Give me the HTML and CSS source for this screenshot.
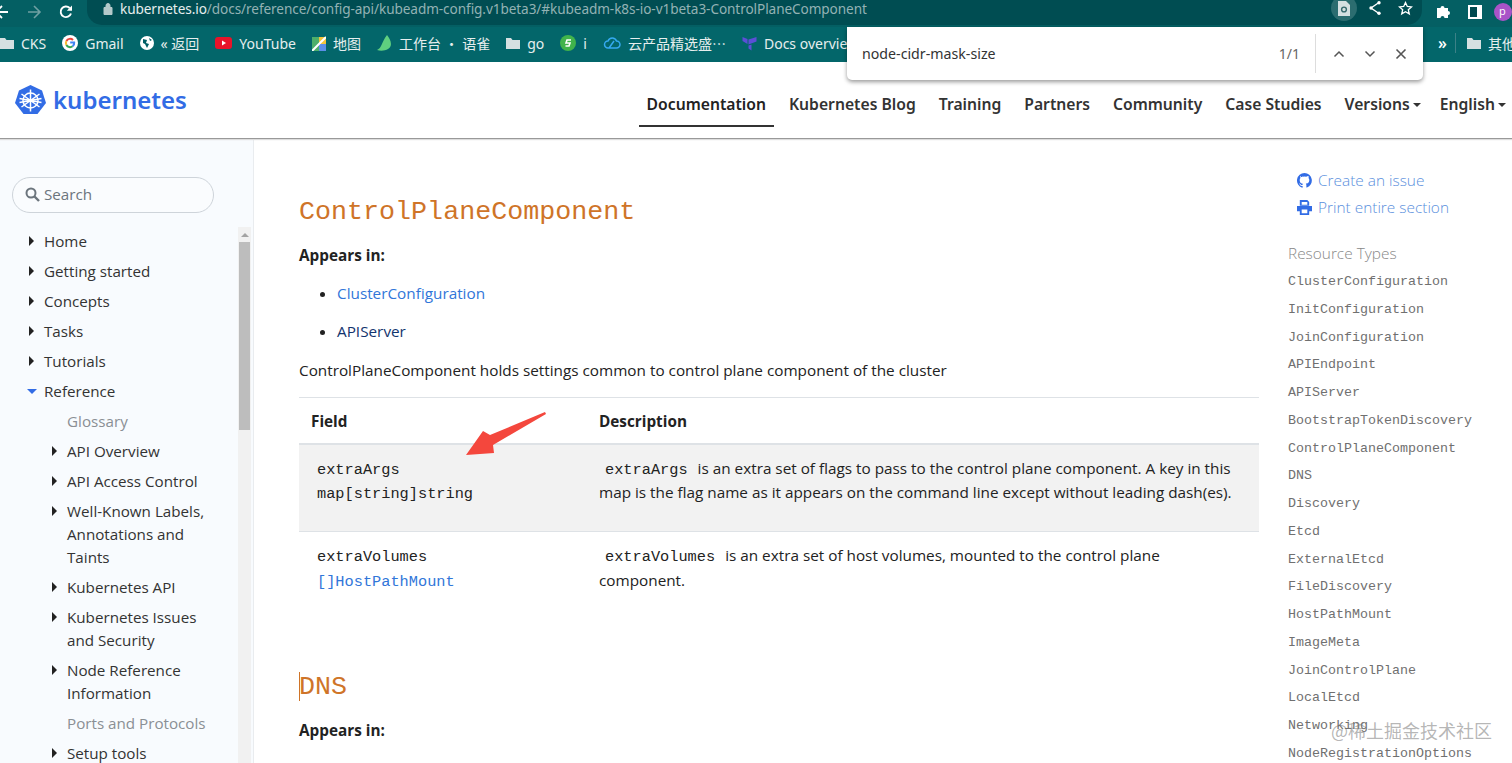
FILE: index.html
```html
<!DOCTYPE html>
<html lang="en">

<head>
    <meta charset="UTF-8">
    <meta name="viewport" content="width=device-width, initial-scale=1.0">
    <title>kubeadm Configuration (v1beta3)</title>
    <link rel="stylesheet" href="styles.css">
</head>

<body>

    <!-- Browser chrome -->
    <div class="toolbar">
        <svg class="nav-icon" width="16" height="16" viewBox="0 0 16 16"><path d="M14 8H2M8 2L2 8l6 6" fill="none" stroke="#fff" stroke-width="1.8"/></svg>
        <svg class="nav-icon" width="16" height="16" viewBox="0 0 16 16"><path d="M2 8h12M8 2l6 6-6 6" fill="none" stroke="#6fa0a3" stroke-width="1.6"/></svg>
        <svg class="nav-icon" width="16" height="16" viewBox="0 0 16 16"><path d="M13 9.500A5.300 5.300 0 1 1 11.700 4" fill="none" stroke="#fff" stroke-width="1.900"/><path d="M14 1.500v5.200H8.800z" fill="#fff"/></svg>
        <div class="omnibox">
            <svg width="10" height="13" viewBox="0 0 10 13"><path d="M1 5.500h8v7H1zM3 5.500V3.500a2 2 0 0 1 4 0v2" fill="#b4c9ca" stroke="#b4c9ca"/></svg>
            <span class="url"><b>kubernetes.io</b>/docs/reference/config-api/kubeadm-config.v1beta3/#kubeadm-k8s-io-v1beta3-ControlPlaneComponent</span>
            <span class="lens">
                <svg width="12" height="15" viewBox="0 0 12 15"><path d="M0 0h8l4 4v11H0z" fill="#d5e0e1"/><circle cx="6" cy="8.500" r="2.400" fill="none" stroke="#35686c" stroke-width="1.400"/></svg>
            </span>
            <svg class="omni-icon share" width="14" height="16" viewBox="0 0 14 16"><path d="M11 2.500L3 8l8 5.500" fill="none" stroke="#fff" stroke-width="1.400"/><circle cx="11" cy="2.800" r="1.700" fill="#fff"/><circle cx="3" cy="8" r="1.700" fill="#fff"/><circle cx="11" cy="13.200" r="1.700" fill="#fff"/></svg>
            <svg class="omni-icon" width="15" height="15" viewBox="0 0 15 15"><path d="M7.500 1.500l1.800 4 4.200.4-3.200 2.800 1 4.200-3.800-2.200-3.800 2.200 1-4.200L1.500 5.900l4.200-.4z" fill="none" stroke="#fff" stroke-width="1.300"/></svg>
        </div>
        <svg class="puzzle" width="15" height="15" viewBox="0 0 15 15"><path d="M1 4h3.500a2 2 0 0 1 4 0H12v3a2 2 0 0 1 0 4v3H8.500a2 2 0 0 0-4 0H1z" fill="#fff"/></svg>
        <svg class="panel" width="14" height="14" viewBox="0 0 14 14"><path d="M0 0h14v14H0z" fill="#fff"/><path d="M2 2h7v10H2z" fill="#00494f"/></svg>
        <span class="avatar">p</span>
    </div>

    <div class="bookmarks">
        <span class="bookmark cut"><svg width="14" height="12" viewBox="0 0 14 12"><path d="M0 1h5l1.500 2H14v9H0z" fill="#d5e0e1"/></svg>CKS</span>
        <span class="bookmark">
            <svg width="16" height="16" viewBox="0 0 16 16">
                <circle cx="8" cy="8" r="8" fill="#fff"/>
                <path d="M11 5a4.200 4.200 0 0 0-6.600 1" fill="none" stroke="#e8453c" stroke-width="2"/>
                <path d="M4.400 6a4.200 4.200 0 0 0 0 4" fill="none" stroke="#f9bb2d" stroke-width="2"/>
                <path d="M4.400 10a4.200 4.200 0 0 0 6.200 1.300" fill="none" stroke="#34a853" stroke-width="2"/>
                <path d="M10.600 11.300A4.200 4.200 0 0 0 12.200 7.500H8.200" fill="none" stroke="#4285f4" stroke-width="2"/>
            </svg>Gmail
        </span>
        <span class="bookmark"><svg width="14" height="14" viewBox="0 0 14 14"><circle cx="7" cy="7" r="7" fill="#fff"/><path d="M3 3l4 1-1 3 3 1-2 4-2-4-2-1zM9 2l3 2-2 1z" fill="#005f66"/></svg>« 返回</span>
        <span class="bookmark"><svg width="17" height="12" viewBox="0 0 17 12"><rect width="17" height="12" rx="3" fill="#e8132a"/><path d="M7 3.500l4 2.500-4 2.500z" fill="#fff"/></svg>YouTube</span>
        <span class="bookmark"><svg width="14" height="15" viewBox="0 0 14 15"><path d="M0 1h7v14H0z" fill="#4caf6a"/><path d="M7 1h7v7H7z" fill="#f2c43a"/><path d="M7 8h7v7H7z" fill="#5b8fe8"/><path d="M0 15L14 1" stroke="#fff" stroke-width="2"/></svg>地图</span>
        <span class="bookmark"><svg width="15" height="16" viewBox="0 0 15 16"><path d="M10 0c4 5 6 11 1 14-3 2-8 2-11 1 5-2 4-7 10-15z" fill="#5fcf7f"/></svg>工作台 ・ 语雀</span>
        <span class="bookmark"><svg width="14" height="12" viewBox="0 0 14 12"><path d="M0 1h5l1.500 2H14v9H0z" fill="#d5e0e1"/></svg>go</span>
        <span class="bookmark"><svg width="16" height="16" viewBox="0 0 16 16"><ellipse cx="8" cy="8" rx="8" ry="8" fill="#41b34b"/><path d="M11 5H7L6 8h4l-1 3H5.500" fill="none" stroke="#fff" stroke-width="1.600"/></svg>i</span>
        <span class="bookmark cjk" lang="zh"><svg width="18" height="14" viewBox="0 0 18 14"><path d="M5 12a3.500 3.500 0 0 1 0-7 4.500 4.500 0 0 1 8.500 0 3.500 3.500 0 0 1 0 7zM6 12l5-7" fill="none" stroke="#35a9ef" stroke-width="1.500"/></svg>云产品精选盛…</span>
        <span class="bookmark"><svg width="15" height="15" viewBox="0 0 14 15"><path d="M0 1l5 2v5L0 5zM14 1L6 3.500v5l8-3zM6 9.500l3-1v6l-3-2z" fill="#5b4fd6"/></svg>Docs overview</span>
        <span class="bookmarks-end">
            <span class="more">»</span>
            <span class="bookmark"><svg width="14" height="12" viewBox="0 0 14 12"><path d="M0 1h5l1.500 2H14v9H0z" fill="#d5e0e1"/></svg>其他书签</span>
        </span>
    </div>

    <!-- Find in page popup -->
    <div class="find-bar">
        <span class="find-text">node-cidr-mask-size</span>
        <span class="find-count">1/1</span>
        <span class="find-actions">
            <svg width="12" height="8" viewBox="0 0 12 8"><path d="M1.500 6.500L6 2l4.500 4.500" fill="none" stroke="#555" stroke-width="1.500"/></svg>
            <svg width="12" height="8" viewBox="0 0 12 8"><path d="M1.500 1.500L6 6l4.500-4.500" fill="none" stroke="#555" stroke-width="1.500"/></svg>
            <svg width="12" height="12" viewBox="0 0 12 12"><path d="M1.500 1.500l9 9M10.500 1.500l-9 9" fill="none" stroke="#555" stroke-width="1.600"/></svg>
        </span>
    </div>

    <!-- Site header -->
    <header class="site-header">
        <a class="brand">
            <svg width="31" height="30" viewBox="0 0 31 30">
                <path d="M15.500 0L27 5.500 31 18 22.500 29H8.500L0 18 4 5.500z" fill="#326ce5"/>
                <g fill="none" stroke="#fff" stroke-width="1.500">
                    <circle cx="15.500" cy="15.500" r="7.500"/>
                    <path d="M15.500 4.500v22M6.500 9l18 13M24.500 9l-18 13M4.500 17.500l22-4M26.500 17.500l-22-4"/>
                </g>
            </svg>
            <span>kubernetes</span>
        </a>
        <nav class="main-nav">
            <a class="active">Documentation</a>
            <a>Kubernetes Blog</a>
            <a>Training</a>
            <a>Partners</a>
            <a>Community</a>
            <a>Case Studies</a>
            <a class="dropdown">Versions</a>
            <a class="dropdown">English</a>
        </nav>
    </header>

    <div class="page">
        <!-- Left sidebar -->
        <aside class="sidebar">
            <div class="search">
                <svg width="15" height="15" viewBox="0 0 15 15"><circle cx="6" cy="6" r="4.500" fill="none" stroke="#6c757d" stroke-width="2"/><path d="M9.500 9.500l4.500 4.500" stroke="#6c757d" stroke-width="2.400"/></svg>
                <span>Search</span>
            </div>
            <div class="tree-wrap">
                <ul class="tree">
                    <li class="closed">Home</li>
                    <li class="closed">Getting started</li>
                    <li class="closed">Concepts</li>
                    <li class="closed">Tasks</li>
                    <li class="closed">Tutorials</li>
                    <li class="open">Reference</li>
                    <li class="sub muted">Glossary</li>
                    <li class="sub closed">API Overview</li>
                    <li class="sub closed">API Access Control</li>
                    <li class="sub closed">Well-Known Labels,<br>Annotations and<br>Taints</li>
                    <li class="sub closed">Kubernetes API</li>
                    <li class="sub closed">Kubernetes Issues<br>and Security</li>
                    <li class="sub closed">Node Reference<br>Information</li>
                    <li class="sub muted">Ports and Protocols</li>
                    <li class="sub closed">Setup tools</li>
                </ul>
                <div class="scrollbar">
                    <span class="scroll-up"></span>
                    <span class="scroll-thumb"></span>
                </div>
            </div>
        </aside>

        <!-- Content -->
        <main class="content">
            <h2>ControlPlaneComponent</h2>
            <p><strong>Appears in:</strong></p>
            <ul class="links">
                <li><a>ClusterConfiguration</a></li>
                <li><a class="visited">APIServer</a></li>
            </ul>
            <p>ControlPlaneComponent holds settings common to control plane component of the cluster</p>
            <table class="fields">
                <thead>
                    <tr>
                        <th class="col-field">Field</th>
                        <th>Description</th>
                    </tr>
                </thead>
                <tbody>
                    <tr>
                        <td class="col-field"><code>extraArgs</code><br><code>map[string]string</code></td>
                        <td><code>extraArgs</code> is an extra set of flags to pass to the control plane component. A key in this map is the flag name as it appears on the command line except without leading dash(es).</td>
                    </tr>
                    <tr>
                        <td class="col-field"><code>extraVolumes</code><br><a><code>[]HostPathMount</code></a></td>
                        <td><code>extraVolumes</code> is an extra set of host volumes, mounted to the control plane component.</td>
                    </tr>
                </tbody>
            </table>
            <h2 class="next-type"><span class="caret"></span>DNS</h2>
            <p><strong>Appears in:</strong></p>
            <ul class="links">
                <li><a>ClusterConfiguration</a></li>
            </ul>
        </main>

        <!-- Right column -->
        <aside class="toc">
            <a class="toc-action">
                <svg width="15" height="15" viewBox="0 0 16 16"><path d="M8 0a8 8 0 0 0-2.500 15.600c.4.100.5-.2.500-.4v-1.400c-2.200.5-2.700-1-2.700-1-.4-.9-.9-1.200-.9-1.200-.7-.5.100-.5.100-.5.800.100 1.200.8 1.200.8.700 1.200 1.900.9 2.300.7.100-.5.300-.9.500-1.100-1.800-.2-3.600-.9-3.600-4 0-.9.300-1.600.8-2.100-.1-.2-.4-1 .1-2.100 0 0 .7-.2 2.200.8a7.600 7.600 0 0 1 4 0c1.500-1 2.200-.8 2.200-.8.400 1.100.2 1.900.1 2.100.5.600.8 1.300.8 2.100 0 3.100-1.900 3.700-3.700 3.900.3.300.6.800.6 1.500v2.200c0 .2.100.5.600.4A8 8 0 0 0 8 0z" fill="#326ce5"/></svg>
                Create an issue
            </a>
            <a class="toc-action">
                <svg width="15" height="15" viewBox="0 0 16 16"><path d="M3 0h8l2 2v4H3zM0 6.500h16V12h-3v4H3v-4H0z" fill="#326ce5"/><path d="M5 2h6v3H5zM5 10h6v4H5z" fill="#fff"/></svg>
                Print entire section
            </a>
            <div class="toc-title">Resource Types</div>
            <ul class="toc-list">
                <li>ClusterConfiguration</li>
                <li>InitConfiguration</li>
                <li>JoinConfiguration</li>
                <li>APIEndpoint</li>
                <li>APIServer</li>
                <li>BootstrapTokenDiscovery</li>
                <li>ControlPlaneComponent</li>
                <li>DNS</li>
                <li>Discovery</li>
                <li>Etcd</li>
                <li>ExternalEtcd</li>
                <li>FileDiscovery</li>
                <li>HostPathMount</li>
                <li>ImageMeta</li>
                <li>JoinControlPlane</li>
                <li>LocalEtcd</li>
                <li>Networking</li>
                <li>NodeRegistrationOptions</li>
            </ul>
        </aside>
    </div>

    <!-- Screenshot annotation and watermark -->
    <svg class="arrow" width="82" height="48" viewBox="0 0 82 48"><path d="M80 1L81 3 28 34 29 42 1 44 18 20 25 24z" fill="#f4473d"/></svg>
    <div class="watermark">@稀土掘金技术社区</div>

</body>

</html>
```

FILE: styles.css
```css
/* Theme colors */
:root {
    --chrome-top: #045f63;
    --chrome-bar: #03666a;
    --link: #3176d9;
    --text: #222;
    --rule: #dee2e6;
}

* {
    box-sizing: border-box;
}

html,
body {
    height: 763px;
    overflow: hidden;
}

body {
    margin: 0;
    position: relative;
    font-family: "Open Sans", sans-serif;
    font-size: 16px;
    color: var(--text);
    background: #fff;
}

/* Browser chrome */
.toolbar {
    height: 27px;
    display: flex;
    align-items: center;
    gap: 13px;
    padding-bottom: 4px;
    background: var(--chrome-top);
}

.nav-icon:first-child {
    margin-left: -6px;
}

.nav-icon {
    flex: none;
    margin-right: 3px;
}

.omnibox {
    flex: 1;
    height: 30px;
    margin: -4px 1px 0 -3px;
    padding: 0 9px 3px 16px;
    display: flex;
    align-items: center;
    gap: 7px;
    background: #004d52;
    border-radius: 0 0 15px 15px;
}

.url {
    flex: 1;
    font-family: "Noto Sans", sans-serif;
    font-size: 13.600px;
    letter-spacing: -0.080px;
    color: #93b2b4;
    white-space: nowrap;
}

.url b {
    font-weight: 400;
    color: #e6eeee;
}

.lens {
    width: 26px;
    height: 26px;
    display: flex;
    align-items: center;
    justify-content: center;
    border-radius: 50%;
    background: #2b6d70;
}

.omni-icon {
    margin-left: 9px;
}

.omni-icon.share {
    margin-left: 4px;
}

.puzzle {
    flex: none;
}

.panel {
    flex: none;
    margin-left: 4px;
}

.avatar {
    flex: none;
    width: 18px;
    height: 18px;
    margin-left: -1px;
    padding-left: 5px;
    border-radius: 50%;
    background: #a953c8;
    color: #fff;
    font-size: 11px;
    line-height: 16px;
}

.bookmarks {
    height: 35px;
    display: flex;
    align-items: center;
    gap: 16px;
    padding-bottom: 3px;
    background: var(--chrome-bar);
    overflow: hidden;
    white-space: nowrap;
}

.bookmark {
    display: flex;
    align-items: center;
    gap: 7px;
    flex: none;
    font-family: "Noto Sans", "Noto Sans CJK SC", sans-serif;
    font-size: 14px;
    color: #e6eeee;
}

.bookmark.cjk {
    font-family: "Noto Sans CJK SC", sans-serif;
}

.bookmarks-end {
    position: absolute;
    right: -32px;
    top: 27px;
    height: 32px;
    display: flex;
    align-items: center;
    gap: 11px;
    background: var(--chrome-bar);
}

.more {
    padding-right: 8px;
    border-right: 1px solid #3c8187;
    color: #fff;
    font-weight: 600;
    line-height: 20px;
}

.find-bar {
    position: absolute;
    top: 27px;
    left: 847px;
    width: 576px;
    height: 53px;
    display: flex;
    align-items: center;
    padding-left: 15px;
    background: #fff;
    border-radius: 0 0 5px 5px;
    box-shadow: 0 2px 4px rgba(0, 0, 0, 0.4);
    font-family: "Noto Sans", sans-serif;
    font-size: 14.200px;
    z-index: 2;
}

.find-text {
    flex: 1;
    color: #333;
}

.find-count {
    color: #666;
    font-size: 14px;
    margin-right: 15px;
}

.find-actions {
    height: 39px;
    display: flex;
    align-items: center;
    gap: 19px;
    margin-right: 16px;
    padding-left: 17px;
    border-left: 1px solid #ddd;
}

/* Site header */
.site-header {
    height: 77px;
    display: flex;
    align-items: flex-start;
    justify-content: space-between;
    padding: 0 0 0 15px;
    border-bottom: 1px solid #999;
    box-shadow: 0 1px 1px #ddd;
    position: relative;
}

.brand {
    display: flex;
    align-items: center;
    gap: 7px;
    margin-top: 23px;
    color: #326ce5;
    font-family: "Noto Sans", sans-serif;
    font-size: 24px;
    font-weight: 600;
    line-height: 30px;
}

.main-nav {
    display: flex;
    gap: 7px;
    margin-top: 23px;
    margin-right: -2px;
    font-family: "Noto Sans", sans-serif;
    font-size: 15.700px;
    font-weight: 600;
    color: #333;
}

.main-nav a {
    height: 42px;
    padding: 8px 8px 0;
    line-height: 22px;
    white-space: nowrap;
}

.main-nav a:last-child {
    margin-left: -4px;
}

.main-nav a.active {
    color: #222;
    border-bottom: 2px solid #333;
}

.main-nav a.dropdown::after {
    content: "";
    display: inline-block;
    margin-left: 3px;
    vertical-align: 3px;
    border-top: 4.500px solid #333;
    border-left: 4.500px solid transparent;
    border-right: 4.500px solid transparent;
}

/* Layout under the header */
.page {
    display: flex;
    height: 624px;
}

.sidebar {
    flex: none;
    width: 254px;
    padding: 38px 0 0 12px;
    background: #f8fbfe;
    border-right: 1px solid #e9ecef;
}

.search {
    width: 202px;
    height: 36px;
    display: flex;
    align-items: center;
    gap: 4px;
    padding: 0 0 2px 12px;
    border: 1px solid #ced4da;
    border-radius: 18px;
    background: #fafcfe;
    font-size: 15.200px;
    color: #6c757d;
}

.tree-wrap {
    position: relative;
    margin-top: 13px;
    height: 600px;
}

.tree {
    list-style: none;
    margin: 0;
    padding: 0 0 0 32px;
    font-size: 15.200px;
    line-height: 23px;
    color: #333;
}

.tree li {
    position: relative;
    padding: 3.500px 0;
    white-space: nowrap;
}

.tree li.sub {
    margin-left: 23px;
}

.tree li.muted {
    color: #8a8f94;
}

.tree li.closed::before,
.tree li.open::before {
    content: "";
    position: absolute;
    top: 10px;
}

.tree li.closed::before {
    left: -15px;
    border-left: 5px solid #222;
    border-top: 5px solid transparent;
    border-bottom: 5px solid transparent;
}

.tree li.open::before {
    left: -17px;
    top: 13px;
    border-top: 5px solid #326ce5;
    border-left: 5px solid transparent;
    border-right: 5px solid transparent;
}

.scrollbar {
    position: absolute;
    top: 1px;
    left: 226px;
    width: 13px;
    height: 540px;
    padding: 0 1px;
    background: #f1f1f1;
}

.scroll-up {
    display: block;
    width: 0;
    margin: 6px auto 5px;
    border-bottom: 4px solid #a3a3a3;
    border-left: 4px solid transparent;
    border-right: 4px solid transparent;
}

.scroll-thumb {
    display: block;
    height: 188px;
    background: #bdbdbd;
}

.content {
    flex: none;
    width: 1034px;
    padding: 55px 0 0 45px;
    font-size: 15.300px;
    line-height: 24px;
    color: #222;
}

.content h2 {
    margin: 0 0 13px;
    font-family: "Liberation Mono", monospace;
    font-size: 26.700px;
    font-weight: 400;
    line-height: 36px;
    color: #cf7428;
}

.content h2.next-type {
    position: relative;
    margin-top: 65px;
    margin-bottom: 13px;
}

.caret {
    position: absolute;
    left: 0;
    top: 3px;
    width: 1px;
    height: 29px;
    background: #cf7428;
}

.content p {
    margin: 0 0 14px;
}

.content strong {
    font-weight: 700;
}

.links {
    margin: 0 0 15px;
    padding-left: 38px;
}

.links li {
    margin-bottom: 14px;
}

.links a {
    color: var(--link);
}

.links a.visited {
    color: #12346e;
}

.fields {
    width: 960px;
    margin-top: 15px;
    border-collapse: collapse;
    table-layout: fixed;
    border-top: 1px solid var(--rule);
}

.fields th {
    height: 46px;
    padding: 2px 12px 0;
    text-align: left;
    font-weight: 700;
    border-bottom: 2px solid var(--rule);
}

.fields .col-field {
    width: 288px;
}

.fields td {
    padding: 11px 12px 12px;
    vertical-align: top;
    line-height: 24.500px;
    border-bottom: 1px solid var(--rule);
}

.fields tbody tr:first-child td {
    height: 88px;
    background: #f2f2f2;
}

.fields tbody tr:last-child td {
    border-bottom: none;
}

.fields code {
    padding: 0 6px;
    font-family: "Liberation Mono", monospace;
    font-size: 15.300px;
    line-height: 1;
}

.fields a {
    color: var(--link);
}

.toc {
    flex: none;
    width: 224px;
    padding: 28px 0 0 0;
    font-size: 15.400px;
    font-weight: 300;
}

.toc-action {
    display: flex;
    align-items: center;
    gap: 6px;
    height: 27px;
    margin-left: 9px;
    color: #5a8fdd;
}

.toc-title {
    margin-top: 22px;
    line-height: 22px;
    color: #888;
}

.toc-list {
    list-style: none;
    margin: 3px 0 0;
    padding: 0;
    font-family: "Liberation Mono", monospace;
    font-size: 13.330px;
    font-weight: 400;
    color: #707070;
}

.toc-list li {
    height: 27.750px;
    line-height: 27.750px;
}

/* Annotation on top of the page */
.arrow {
    position: absolute;
    left: 465px;
    top: 411px;
}

.watermark {
    position: absolute;
    right: 20px;
    bottom: 20px;
    font-family: "Noto Sans CJK SC", sans-serif;
    font-size: 18px;
    color: rgba(120, 120, 120, 0.55);
}
```
